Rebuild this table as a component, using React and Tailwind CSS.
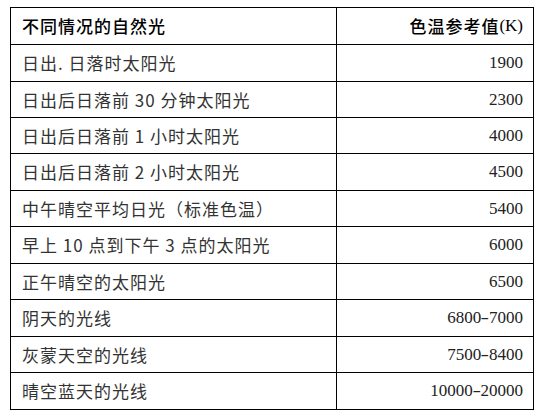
import React from 'react';

const rows = [
  { name: '日出. 日落时太阳光', temp: '1900', h: 'h-[37px]' },
  { name: '日出后日落前 30 分钟太阳光', temp: '2300', h: 'h-[36px]' },
  { name: '日出后日落前 1 小时太阳光', temp: '4000', h: 'h-[36px]' },
  { name: '日出后日落前 2 小时太阳光', temp: '4500', h: 'h-[37px]' },
  { name: '中午晴空平均日光（标准色温）', temp: '5400', h: 'h-[36px]' },
  { name: '早上 10 点到下午 3 点的太阳光', temp: '6000', h: 'h-[37px]' },
  { name: '正午晴空的太阳光', temp: '6500', h: 'h-[36px]' },
  { name: '阴天的光线', temp: '6800-7000', h: 'h-[37px]' },
  { name: '灰蒙天空的光线', temp: '7500-8400', h: 'h-[36px]' },
  { name: '晴空蓝天的光线', temp: '10000-20000', h: 'h-[37px]' },
];

// the dash between the two numbers is drawn wider in the original
const Temp = ({ value }) => {
  const parts = value.split('-');
  if (parts.length === 1) return value;
  return (
    <>
      {parts[0]}
      <span className="inline-block mx-[1px] scale-x-150">-</span>
      {parts[1]}
    </>
  );
};

const App = () => {
  return (
    <div className="min-h-screen bg-white pt-[7px] pl-[10px]">
      <div className="w-[524px] border-l border-t border-black">
        {/* header */}
        <div className="flex h-[37px]">
          <div className="w-[326px] border-r border-b border-black flex items-center pl-[11px] text-[17px] tracking-[1px] text-black font-medium font-['Noto_Sans_CJK_SC',sans-serif]">
            不同情况的自然光
          </div>
          <div className="w-[197px] border-r border-b border-black flex items-center justify-end pr-[10px] text-[17px] text-black font-medium font-['Liberation_Serif','Noto_Sans_CJK_SC',serif]">
            <span className="tracking-[1px] font-['Noto_Sans_CJK_SC',sans-serif]">色温参考值</span>
            <span className="font-normal">(K)</span>
          </div>
        </div>

        {rows.map((row, index) => (
          <div key={index} className={`flex ${row.h}`}>
            <div className="w-[326px] border-r border-b border-black flex items-center pl-[11px] text-[17px] tracking-[1px] text-[#333] font-['Noto_Sans_CJK_SC',sans-serif]">
              {row.name}
            </div>
            <div className="w-[197px] border-r border-b border-black flex items-center justify-end pr-[10px] text-[17px] text-[#222] font-['Liberation_Serif',serif]">
              <Temp value={row.temp} />
            </div>
          </div>
        ))}
      </div>
    </div>
  );
};

export default App;
